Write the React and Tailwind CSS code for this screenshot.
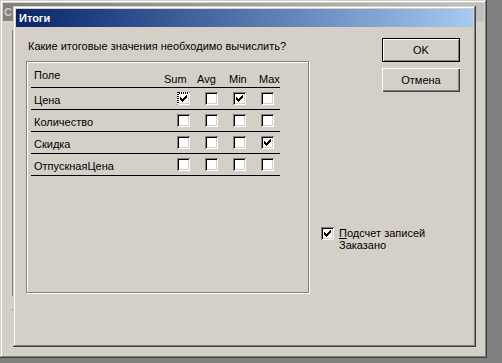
import React from 'react';

const COLS = [2, 3, 4, 3, 2, 1, 0];

const Tick = () => (
  <svg width="7" height="7" viewBox="0 0 7 7" shapeRendering="crispEdges" className="absolute left-[3px] top-[3px]">
    {COLS.map((r, i) => <rect key={i} x={i} y={r} width="1" height="3" fill="#000" />)}
  </svg>
);

const Box = ({ checked, focus }) => (
  <span className="relative block w-[13px] h-[13px] shrink-0 bg-white shadow-[inset_1px_1px_0_#808080,inset_-1px_-1px_0_#fff,inset_2px_2px_0_#000,inset_-2px_-2px_0_#d4d0c8]">
    {checked && <Tick />}
    {focus && (
      <>
        <span className="absolute left-0 top-0 w-[12px] h-[2px] bg-[repeating-linear-gradient(90deg,#000_0_1px,#fff_1px_2px)]" />
        <span className="absolute left-0 top-0 w-[2px] h-[12px] bg-[repeating-linear-gradient(180deg,#000_0_1px,#fff_1px_2px)]" />
      </>
    )}
  </span>
);

const rows = [
  { name: 'Цена', vals: [true, false, true, false], focus: 0 },
  { name: 'Количество', vals: [false, false, false, false] },
  { name: 'Скидка', vals: [false, false, false, true] },
  { name: 'ОтпускнаяЦена', vals: [false, false, false, false] },
];

const cellW = ['w-[28px]', 'w-[28px]', 'w-[28px]', 'w-[19px]'];

const raised = 'shadow-[inset_-1px_-1px_0_#404040,inset_1px_1px_0_#d4d0c8,inset_-2px_-2px_0_#808080,inset_2px_2px_0_#fff]';

export default function App() {
  return (
    <div className="relative w-[502px] h-[363px] bg-[#808080] overflow-hidden font-['Liberation_Sans',Arial,sans-serif] text-[11px] leading-[13px] text-black">
      {/* background window */}
      <div className={`absolute left-0 top-0 w-[487px] h-[358px] bg-[#d4d0c8] p-[3px] ${raised}`}>
        <div className="h-[18px] bg-gradient-to-r from-[#808080] to-[#c0c0c0] pl-[1px] flex items-center font-bold text-[#d4d0c8]">С</div>
        <div className="ml-[9px] mt-[9px] h-[266px] border-l border-[#808080]" />
        <div className="ml-[9px] mt-[13px] w-[1px] h-[1px] bg-[#808080]" />
      </div>

      {/* dialog */}
      <div className={`absolute left-[13px] top-[6px] w-[463px] h-[341px] bg-[#d4d0c8] p-[3px] ${raised}`}>
        <div className="h-[18px] bg-gradient-to-r from-[#0a246a] to-[#a6caf0] pl-[3px] flex items-center font-bold text-white">Итоги</div>
        <div className="flex">
          <div className="w-[294px] pl-[10px] shrink-0">
            <div className="pt-[13px] pl-[2px] whitespace-nowrap">Какие итоговые значения необходимо вычислить?</div>
            <div className="mt-[8px] w-[283px] h-[232px] border border-[#808080] shadow-[1px_1px_0_#fff,inset_1px_1px_0_#fff] pt-[1px]">
              <div className="ml-[4px] w-[249px]">
                <div className="h-[25px] flex border-b border-black">
                  <div className="w-[133px] pl-[3px] pt-[6px]">Поле</div>
                  <div className="w-[33px] pt-[10px]">Sum</div>
                  <div className="w-[32px] pt-[10px]">Avg</div>
                  <div className="w-[30px] pt-[10px]">Min</div>
                  <div className="pt-[10px]">Max</div>
                </div>
                {rows.map((r) => (
                  <div key={r.name} className="h-[22px] flex items-start border-b border-black">
                    <div className="w-[146px] pl-[3px] pt-[6px]">{r.name}</div>
                    {r.vals.map((v, i) => (
                      <div key={i} className={`${cellW[i]} pt-[4px]`}>
                        <Box checked={v} focus={r.focus === i} />
                      </div>
                    ))}
                  </div>
                ))}
              </div>
            </div>
          </div>

          <div className="flex-1 flex flex-col">
            <div className="pt-[11px] pl-[72px] flex flex-col gap-[6px]">
              <button className="w-[78px] h-[24px] border border-black bg-[#d4d0c8] shadow-[inset_1px_1px_0_#fff,inset_-1px_-1px_0_#808080] flex items-center justify-center">OK</button>
              <button className="w-[78px] h-[24px] bg-[#d4d0c8] shadow-[inset_1px_1px_0_#fff,inset_-1px_-1px_0_#404040,inset_-2px_-2px_0_#808080] flex items-center justify-center">Отмена</button>
            </div>
            <div className="mt-[135px] pl-[11px] flex items-start">
              <Box checked />
              <div className="ml-[5px] leading-[12px]">
                <div><span className="underline">П</span>одсчет записей</div>
                <div>Заказано</div>
              </div>
            </div>
          </div>
        </div>
      </div>
    </div>
  );
}
